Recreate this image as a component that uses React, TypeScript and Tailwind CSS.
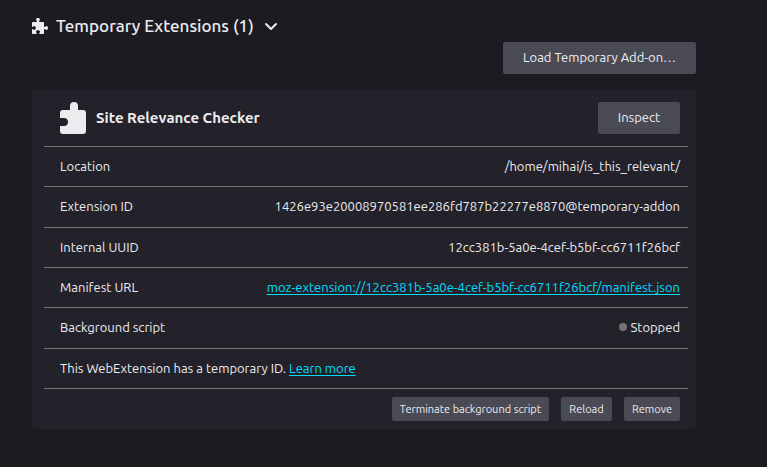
import type { ReactNode } from "react";

function PuzzleIcon() {
  return (
    <svg viewBox="0 0 16 16" className="size-4 shrink-0" fill="currentColor" aria-hidden="true">
      <path d="M1 4h3.200c.5 0 .8-.3.800-.8 0-.6-.9-.9-.9-1.800C4.100.6 4.900 0 6 0s1.900.6 1.900 1.400c0 .9-.9 1.200-.9 1.800 0 .5.300.8.800.8H11c.6 0 1 .4 1 1v3.200c0 .5.300.8.800.8.600 0 .8-1 1.700-1 .9 0 1.500.9 1.500 2s-.6 2-1.500 2c-.9 0-1.100-1-1.700-1-.5 0-.8.300-.8.800V15c0 .6-.4 1-1 1H7.800c-.4 0-.7-.3-.7-.7 0-.6.900-.8.900-1.600 0-.8-.9-1.500-2-1.500s-2 .7-2 1.500c0 .8.900 1 .9 1.600 0 .4-.3.700-.7.700H1c-.6 0-1-.4-1-1v-3.300c0-.4.300-.7.700-.7.600 0 .8.900 1.600.9.800 0 1.500-.8 1.500-1.900S3.100 8.100 2.300 8.100c-.8 0-1 .9-1.600.9-.4 0-.7-.3-.7-.7V5c0-.6.400-1 1-1z" />
    </svg>
  );
}

function ExtensionIcon() {
  return (
    <svg viewBox="0 0 32 32" className="size-8 shrink-0" fill="currentColor" aria-hidden="true">
      <path d="M7 8h7V4a4 4 0 0 1 8 0v4h5a3 3 0 0 1 3 3v18a3 3 0 0 1-3 3H7a3 3 0 0 1-3-3v-5h4a4 4 0 0 0 0-8H4v-5a3 3 0 0 1 3-3z" />
    </svg>
  );
}

function Button({ children, small, className }: { children: ReactNode; small?: boolean; className: string }) {
  return (
    <button
      type="button"
      className={`rounded-[2px] bg-[#4a4a55] whitespace-nowrap ${small ? "h-6 text-[11px]" : "h-8 pb-0.5 text-[13px]"} ${className}`}
    >
      {children}
    </button>
  );
}

function Row({ label, children }: { label: string; children: ReactNode }) {
  return (
    <div className="flex items-center justify-between gap-4 border-b border-[#737373] pr-2 pb-px pl-4">
      <dt>{label}</dt>
      <dd>{children}</dd>
    </div>
  );
}

const link = "text-[#00ddff] underline underline-offset-2";

export default function App() {
  return (
    <main className="min-h-screen bg-[#1c1b22] px-8 pt-4 pb-8 font-['Ubuntu','Noto_Sans',sans-serif] text-[13px] leading-5 text-[#ececee]">
      <section className="max-w-[664px]">
        <h2 className="text-[17px] leading-5 font-medium">
          <button type="button" aria-expanded="true" className="flex items-center gap-2">
            <PuzzleIcon />
            <span>Temporary Extensions (1)</span>
            <svg viewBox="0 0 16 16" className="size-4" fill="none" stroke="currentColor" strokeWidth="2" strokeLinecap="round" strokeLinejoin="round" aria-hidden="true">
              <path d="M4 6l5 5 5-5" />
            </svg>
          </button>
        </h2>
        <div className="mt-1.5 flex justify-end">
          <Button className="w-[193px]">Load Temporary Add-on…</Button>
        </div>

        <article className="mt-4 rounded bg-[#23222b] pr-2 pb-2 pl-3">
          <header className="flex items-center gap-2 border-b border-[#737373] py-3 pr-2 pl-3">
            <ExtensionIcon />
            <h3 className="flex-1 text-[15px] font-semibold">Site Relevance Checker</h3>
            <Button className="w-[82px]">Inspect</Button>
          </header>
          <dl className="grid min-h-[242px] auto-rows-fr">
            <Row label="Location">/home/mihai/is_this_relevant/</Row>
            <Row label="Extension ID">1426e93e20008970581ee286fd787b22277e8870@temporary-addon</Row>
            <Row label="Internal UUID">12cc381b-5a0e-4cef-b5bf-cc6711f26bcf</Row>
            <Row label="Manifest URL">
              <a href="#manifest" className={link}>moz-extension://12cc381b-5a0e-4cef-b5bf-cc6711f26bcf/manifest.json</a>
            </Row>
            <Row label="Background script">
              <span className="flex items-center gap-1">
                <span className="size-2 rounded-full bg-[#737373]" />
                Stopped
              </span>
            </Row>
            <div className="flex items-center border-b border-[#737373] pb-px pl-4">
              <p>
                This WebExtension has a temporary ID. <a href="#learn-more" className={link}>Learn more</a>
              </p>
            </div>
          </dl>
          <footer className="flex justify-end gap-3 pt-2 pr-2">
            <Button small className="w-[157px]">Terminate background script</Button>
            <Button small className="w-[51px]">Reload</Button>
            <Button small className="w-14">Remove</Button>
          </footer>
        </article>
      </section>
    </main>
  );
}
